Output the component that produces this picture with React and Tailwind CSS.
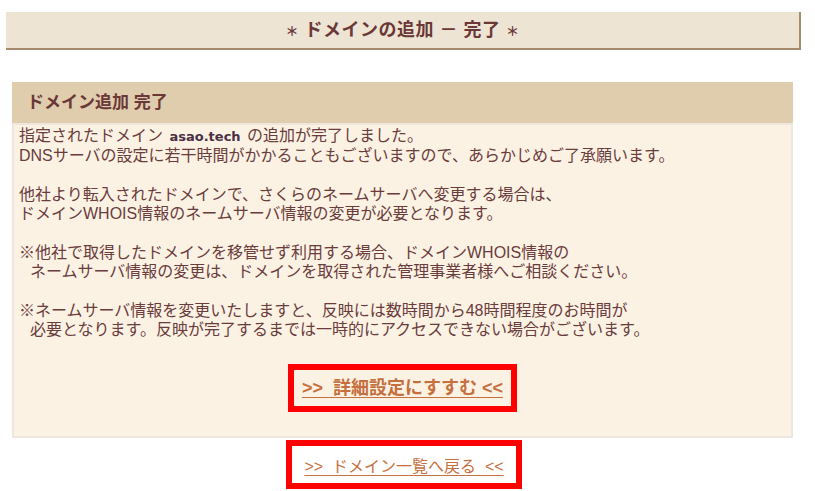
const jp = { fontFamily: '"Liberation Sans", "Noto Sans CJK JP", sans-serif' };

function Para({ lines, indent }) {
  return (
    <div className="mt-[20px] first:mt-0">
      {lines.map((l, i) => (
        <div key={i} className={i > 0 && indent ? "pl-[11px]" : ""}>{l}</div>
      ))}
    </div>
  );
}

export default function App() {
  return (
    <div className="min-h-[491px] w-[815px] bg-white pt-[12px]" style={jp}>
      <div className="ml-[6px] w-[795px] h-[38px] bg-[#ede4d4] border-r-2 border-b-2 border-[#a58b6b] flex items-center justify-center">
        <h1 className="text-[18px] font-bold text-[#6b3838] tracking-[0.5px] leading-none whitespace-pre">
          <span className="text-[13px] align-middle">＊</span> ドメインの追加 － 完了 <span className="text-[13px] align-middle">＊</span>
        </h1>
      </div>

      <div className="ml-[12px] w-[781px] mt-[32px]">
        <div className="h-[41px] bg-[#dfcdad] flex items-center pl-[15px]">
          <h2 className="text-[17px] font-bold text-[#6b3838] leading-none">ドメイン追加 完了</h2>
        </div>
        <div className="bg-[#fcf2e4] border-2 border-[#efe7df] pt-[1px] pb-[24px] px-[5px] text-[16px] leading-[19px] text-[#6a3c3c]">
          <Para
            lines={[
              <>指定されたドメイン <span className="mx-[2px] font-bold text-[13px] text-[#4b3045]" style={{ fontFamily: '"DejaVu Sans", sans-serif' }}>asao.tech</span> の追加が完了しました。</>,
              "DNSサーバの設定に若干時間がかかることもございますので、あらかじめご了承願います。",
            ]}
          />
          <Para
            lines={[
              "他社より転入されたドメインで、さくらのネームサーバへ変更する場合は、",
              "ドメインWHOIS情報のネームサーバ情報の変更が必要となります。",
            ]}
          />
          <Para
            indent
            lines={[
              "※他社で取得したドメインを移管せず利用する場合、ドメインWHOIS情報の",
              "ネームサーバ情報の変更は、ドメインを取得された管理事業者様へご相談ください。",
            ]}
          />
          <Para
            indent
            lines={[
              "※ネームサーバ情報を変更いたしますと、反映には数時間から48時間程度のお時間が",
              "必要となります。反映が完了するまでは一時的にアクセスできない場合がございます。",
            ]}
          />
          <div className="mt-[25px] flex justify-center">
            <div className="w-[229px] h-[48px] border-[6px] border-[#ff0000] flex items-center justify-center">
              <a href="#" className="text-[18px] font-bold text-[#c5703e] underline underline-offset-[3px] whitespace-pre leading-none">{">>  詳細設定にすすむ <<"}</a>
            </div>
          </div>
        </div>
      </div>

      <div className="ml-[12px] w-[781px] mt-[2px] flex justify-center">
        <div className="ml-[3px] w-[236px] h-[49px] border-[6px] border-[#ff0000] flex items-center justify-center pt-[5px]">
          <a href="#" className="text-[16px] text-[#c5703e] underline underline-offset-[3px] whitespace-pre leading-none">{">>  ドメイン一覧へ戻る  <<"}</a>
        </div>
      </div>
    </div>
  );
}
